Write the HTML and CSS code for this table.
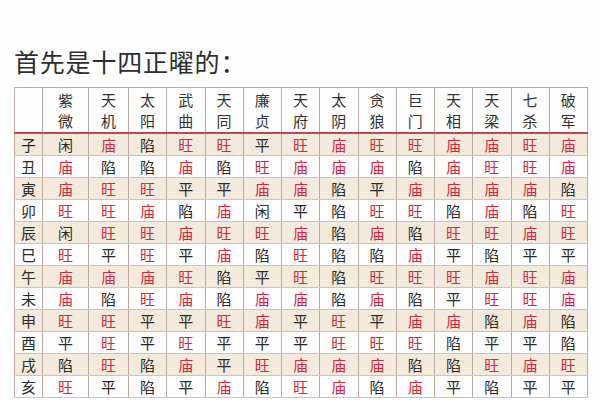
FILE: index.html
```html
<!DOCTYPE html>
<html lang="zh">
<head>
<meta charset="utf-8">
<link rel="stylesheet" href="styles.css">
</head>
<body>
<div class="page">
  <h1 class="title">首先是十四正曜的：</h1>
  <table class="grid">
    <colgroup>
      <col class="c-branch"><col class="c-first"><col class="c-second">
      <col class="c-std"><col class="c-std"><col class="c-std"><col class="c-std"><col class="c-std"><col class="c-std">
      <col class="c-std"><col class="c-std"><col class="c-std"><col class="c-std"><col class="c-std"><col class="c-std">
    </colgroup>
    <thead>
      <tr>
        <th></th>
        <th>紫<br>微</th><th>天<br>机</th><th>太<br>阳</th><th>武<br>曲</th><th>天<br>同</th><th>廉<br>贞</th><th>天<br>府</th>
        <th>太<br>阴</th><th>贪<br>狼</th><th>巨<br>门</th><th>天<br>相</th><th>天<br>梁</th><th>七<br>杀</th><th>破<br>军</th>
      </tr>
    </thead>
    <tbody id="rows"></tbody>
  </table>
</div>
<script src="app.js"></script>
</body>
</html>
```

FILE: app.js
```js
const data = [
  ["子","闲 庙 陷 旺 旺 平 旺 庙 旺 旺 庙 庙 旺 庙"],
  ["丑","庙 陷 陷 庙 陷 旺 庙 庙 庙 陷 庙 旺 旺 庙"],
  ["寅","庙 旺 旺 平 平 庙 庙 陷 平 庙 庙 庙 庙 陷"],
  ["卯","旺 旺 庙 陷 庙 闲 平 陷 旺 旺 陷 庙 陷 旺"],
  ["辰","闲 旺 旺 庙 旺 旺 庙 陷 庙 陷 旺 旺 庙 旺"],
  ["巳","旺 平 旺 平 庙 陷 旺 陷 陷 庙 平 陷 平 平"],
  ["午","庙 庙 庙 旺 陷 平 旺 陷 旺 旺 旺 庙 旺 庙"],
  ["未","庙 陷 旺 庙 陷 庙 庙 陷 庙 陷 平 旺 旺 庙"],
  ["申","旺 旺 平 平 旺 庙 平 旺 平 庙 庙 陷 庙 陷"],
  ["酉","平 旺 平 旺 平 平 平 旺 旺 旺 陷 平 平 陷"],
  ["戌","陷 旺 陷 庙 平 旺 庙 庙 庙 陷 陷 旺 庙 旺"],
  ["亥","旺 平 陷 平 庙 陷 旺 庙 陷 庙 平 陷 平 平"]
];
const tbody = document.getElementById("rows");
data.forEach(([b, vals], i) => {
  const tr = document.createElement("tr");
  if (i % 2 === 0) tr.className = "alt";
  const th = document.createElement("th");
  th.className = "branch";
  th.textContent = b;
  tr.appendChild(th);
  vals.split(" ").forEach(v => {
    const td = document.createElement("td");
    td.textContent = v;
    if (v === "庙" || v === "旺") td.className = "good";
    tr.appendChild(td);
  });
  tbody.appendChild(tr);
});
```

FILE: styles.css
```css
html, body {
  margin: 0;
  padding: 0;
  background: #fefefe;
}
.page {
  padding: 47px 0 0 14px;
  font-family: "Noto Sans CJK SC", "Noto Sans", sans-serif;
}
.title {
  margin: 0 0 11px 0;
  font-size: 25px;
  line-height: 29px;
  font-weight: 400;
  color: #2e2e2e;
  letter-spacing: 0.8px;
}
.grid {
  border-collapse: collapse;
  table-layout: fixed;
  width: 573px;
  font-size: 15px;
  color: #2a2a2a;
}
.c-branch { width: 28px; }
.c-first { width: 46px; }
.c-second { width: 40px; }
.c-std { width: 38.25px; }
.grid th, .grid td {
  border: 1px solid #bba9a2;
  text-align: center;
  padding: 0;
  font-weight: 400;
}
.grid thead th {
  height: 44px;
  line-height: 21px;
  font-size: 15px;
  color: #333;
  vertical-align: middle;
}
.grid tbody td, .grid tbody th {
  height: 21px;
  line-height: 21px;
  border-top-color: #dcbcb4;
  border-bottom-color: #dcbcb4;
}
.grid tbody tr:first-child td, .grid tbody tr:first-child th {
  border-top: 2px solid #c24552;
}
.grid tr.alt td, .grid tr.alt th {
  background: #f4eadb;
}
.grid td.good {
  color: #d3283f;
}
.grid th.branch {
  color: #2a2a2a;
}
```
